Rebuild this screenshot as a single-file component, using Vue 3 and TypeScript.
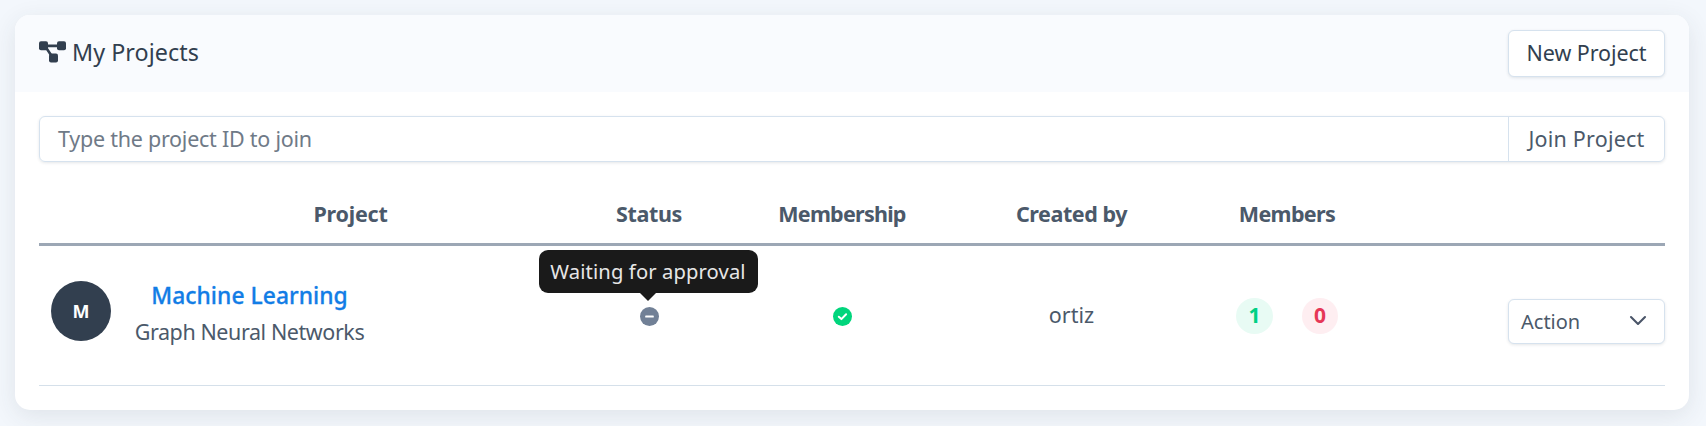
<script setup lang="ts">
interface Project {
  initial: string
  name: string
  topic: string
  statusHint: string
  owner: string
  active: number
  pending: number
}

const columns: string[] = ['', 'Project', 'Status', 'Membership', 'Created by', 'Members', '']

const projects: Project[] = [
  {
    initial: 'M',
    name: 'Machine Learning',
    topic: 'Graph Neural Networks',
    statusHint: 'Waiting for approval',
    owner: 'ortiz',
    active: 1,
    pending: 0,
  },
]
</script>

<template>
  <main class="page">
    <section class="card">
      <header class="card-header">
        <h1 class="title">
          <svg class="title-icon" viewBox="0 0 27 22" aria-hidden="true">
            <path d="M5 4.9H22M6 5L14 17" fill="none" stroke="currentColor" stroke-width="2.6" />
            <rect x="0" y="0.3" width="9" height="9" rx="2" fill="currentColor" />
            <rect x="18" y="0.3" width="9" height="9" rx="2" fill="currentColor" />
            <rect x="10" y="12.6" width="9" height="9" rx="2" fill="currentColor" />
          </svg>
          <span class="title-text">My Projects</span>
        </h1>
        <button class="button new-button" type="button"><span>New Project</span></button>
      </header>

      <div class="card-body">
        <div class="join">
          <div class="join-input"><span class="placeholder">Type the project ID to join</span></div>
          <button class="join-button" type="button"><span>Join Project</span></button>
        </div>

        <div class="row head">
          <div v-for="(label, i) in columns" :key="i" class="cell">
            <span :class="'head-' + i">{{ label }}</span>
          </div>
        </div>

        <div v-for="p in projects" :key="p.name" class="row item">
          <div class="cell avatar-cell">
            <div class="avatar"><span>{{ p.initial }}</span></div>
          </div>
          <div class="cell project-cell">
            <div class="project">
              <a class="project-name">{{ p.name }}</a>
              <span class="project-topic">{{ p.topic }}</span>
            </div>
          </div>
          <div class="cell icon-cell">
            <div class="status">
              <svg class="dot" viewBox="0 0 19 19" aria-hidden="true">
                <circle cx="9.5" cy="9.5" r="9.5" fill="#718096" />
                <rect x="5.2" y="8.6" width="8.6" height="2" rx="0.6" fill="#fff" />
              </svg>
              <div class="tooltip"><span>{{ p.statusHint }}</span></div>
            </div>
          </div>
          <div class="cell icon-cell">
            <svg class="dot" viewBox="0 0 19 19" aria-hidden="true">
              <circle cx="9.5" cy="9.5" r="9.5" fill="#00d57c" />
              <path d="M5.8 9.7L8.4 12.1L13.1 7.2" fill="none" stroke="#fff" stroke-width="2" stroke-linecap="round" stroke-linejoin="round" />
            </svg>
          </div>
          <div class="cell"><span class="owner">{{ p.owner }}</span></div>
          <div class="cell badges">
            <span class="badge ok"><span>{{ p.active }}</span></span>
            <span class="badge bad"><span>{{ p.pending }}</span></span>
          </div>
          <div class="cell action-cell">
            <div class="button action">
              <span>Action</span>
              <svg class="chevron" viewBox="0 0 18 11" aria-hidden="true">
                <path d="M2 2L9 9L16 2" fill="none" stroke="#4a5568" stroke-width="2.1" stroke-linecap="round" stroke-linejoin="round" />
              </svg>
            </div>
          </div>
        </div>
      </div>
    </section>
  </main>
</template>

<style>
body {
  margin: 0;
  background: #f3f7fc;
}
</style>

<style scoped>
.page {
  box-sizing: border-box;
  width: 1706px;
  height: 426px;
  padding: 15px 17px 16px 15px;
  overflow: hidden;
  background: #f3f7fc;
  color: #4b596a;
  font-family: "Noto Sans", "Open Sans", sans-serif;
  font-size: 21.5px;
  line-height: 30px;
  white-space: nowrap;
}
.card {
  height: 395px;
  border-radius: 15px;
  background: #fff;
  box-shadow: 0 6px 24px rgba(45, 60, 72, 0.1);
}
.card-header {
  box-sizing: border-box;
  display: flex;
  align-items: flex-start;
  justify-content: space-between;
  height: 77px;
  padding: 15px 24px 0;
  border-radius: 15px 15px 0 0;
  background: #f9fbfe;
}
.title {
  display: flex;
  gap: 6px;
  margin: 7px 0 0;
  color: #323f4f;
  font-size: 23.3px;
  font-weight: 400;
  letter-spacing: 0.05px;
}
.title-icon {
  width: 27px;
  height: 22px;
  margin-top: 4px;
  color: #323f4f;
}
.button {
  box-sizing: border-box;
  border: 1px solid #d6e2ee;
  border-radius: 6px;
  background: #fff;
  box-shadow: 0 1px 3px rgba(45, 55, 72, 0.12);
}
.new-button,
.join-button {
  width: 157px;
  padding: 0;
  font: inherit;
}
.new-button {
  height: 47px;
  color: #323f4f;
  letter-spacing: -0.08px;
}
.new-button span {
  position: relative;
  top: -1px;
}
.card-body {
  padding: 24px 24px 0;
}
.join {
  box-sizing: border-box;
  display: flex;
  height: 46px;
  border: 1px solid #d6e2ee;
  border-radius: 6px;
  box-shadow: 0 1px 3px rgba(45, 55, 72, 0.12);
}
.join-input {
  flex: 1;
  padding: 7px 18px;
  color: #6f7a87;
  letter-spacing: -0.25px;
}
.join-button {
  width: 156px;
  border: 0;
  border-left: 1px solid #d6e2ee;
  background: none;
  color: #4b596a;
  letter-spacing: 0.2px;
}
.row {
  display: grid;
  grid-template-columns: 84px 455px 142px 244px 215px 216px 270px;
}
.cell {
  display: flex;
  align-items: center;
  justify-content: center;
}
.head {
  height: 81px;
  border-bottom: 3px solid #9ca7b5;
  font-weight: 700;
}
.head .cell {
  padding-top: 22px;
}
.head-1 {
  letter-spacing: -0.2px;
}
.head-2 {
  letter-spacing: -0.35px;
}
.head-3 {
  letter-spacing: -0.75px;
}
.head-4 {
  letter-spacing: -0.45px;
}
.head-5 {
  letter-spacing: -0.65px;
}
.item {
  height: 139px;
  border-bottom: 1px solid #d5e0ea;
}
.avatar-cell {
  align-items: flex-start;
  padding-top: 35px;
}
.avatar {
  display: flex;
  align-items: center;
  justify-content: center;
  width: 60px;
  height: 60px;
  border-radius: 50%;
  background: #323f4f;
  color: #fff;
  font-size: 18px;
  font-weight: 700;
}
.project-cell {
  align-items: flex-start;
  justify-content: flex-start;
  padding: 35px 0 0 11px;
}
.project {
  display: flex;
  flex-direction: column;
  align-items: center;
  gap: 6px;
  width: 231px;
}
.project-name {
  color: #127de6;
  font-size: 22.8px;
  font-weight: 500;
  letter-spacing: 0.05px;
  -webkit-text-stroke: 0.3px #127de6;
}
.project-topic {
  letter-spacing: -0.42px;
}
.icon-cell {
  padding-top: 1px;
}
.status {
  position: relative;
  height: 19px;
}
.dot {
  display: block;
  width: 19px;
  height: 19px;
}
.tooltip {
  position: absolute;
  bottom: 33px;
  left: -101px;
  width: 219px;
  height: 43px;
  border-radius: 9px;
  background: #1a1a1a;
  color: #e6e6e6;
  font-size: 20.2px;
  line-height: 42px;
  letter-spacing: 0.12px;
  text-align: center;
}
.tooltip::after {
  content: '';
  position: absolute;
  top: 100%;
  left: 50%;
  margin-left: -8px;
  border: 8px solid transparent;
  border-top-color: #1a1a1a;
  border-bottom: 0;
}
.owner {
  margin-top: -2px;
}
.badges {
  gap: 29px;
}
.badge {
  display: flex;
  align-items: center;
  justify-content: center;
  width: 37px;
  height: 36px;
  border-radius: 50%;
  font-size: 21px;
  font-weight: 700;
}
.badge span {
  margin-top: -2px;
}
.ok {
  background: #e8fbf4;
  color: #00d084;
}
.bad {
  width: 36px;
  background: #feeef1;
  color: #e63757;
}
.action-cell {
  justify-content: flex-end;
}
.action {
  display: flex;
  align-items: center;
  justify-content: space-between;
  width: 157px;
  height: 45px;
  margin-top: 12px;
  padding: 0 17px 0 12px;
  font-size: 20px;
}
.chevron {
  width: 18px;
  height: 11px;
  margin-top: -2px;
}
</style>
